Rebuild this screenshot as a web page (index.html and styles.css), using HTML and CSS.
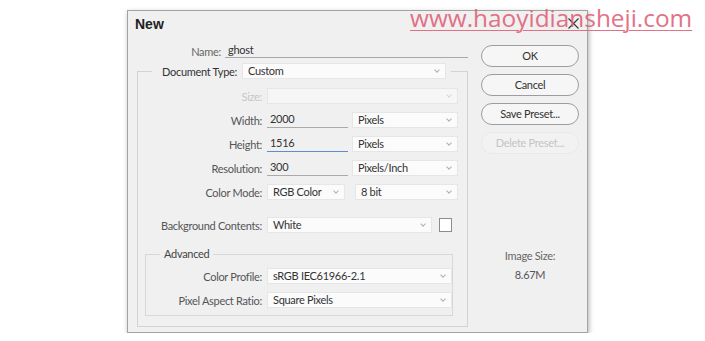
FILE: index.html
```html
<!DOCTYPE html>
<html lang="en">
<head>
    <meta charset="UTF-8">
    <meta name="viewport" content="width=device-width, initial-scale=1.0">
    <title>New</title>
    <link rel="stylesheet" href="styles.css">
</head>
<body>
    <div class="watermark">www.haoyidiansheji.com</div>
    <div class="dialog">
        <div class="titlebar">
            <span class="title">New</span>
            <svg class="close" width="11" height="11" viewBox="0 0 11 11">
                <path d="M0.5 0.5 L10.5 10.5 M10.5 0.5 L0.5 10.5" stroke="#333" stroke-width="1.1" fill="none"/>
            </svg>
        </div>
        <div class="dialog-body">
            <div class="form">
                <div class="name-row">
                    <span class="name-label">Name:</span>
                    <span class="name-value">ghost</span>
                </div>
                <fieldset class="group">
                    <legend class="group-legend">
                        <div class="legend-row">
                            <span class="doc-label">Document Type:</span>
                            <div class="select doc-select">Custom</div>
                        </div>
                    </legend>
                    <div class="row first">
                        <span class="lbl disabled">Size:</span>
                        <div class="select size-select disabled"></div>
                    </div>
                    <div class="row">
                        <span class="lbl">Width:</span>
                        <div class="field">2000</div>
                        <div class="select unit-select">Pixels</div>
                    </div>
                    <div class="row">
                        <span class="lbl">Height:</span>
                        <div class="field focused">1516</div>
                        <div class="select unit-select">Pixels</div>
                    </div>
                    <div class="row">
                        <span class="lbl">Resolution:</span>
                        <div class="field">300</div>
                        <div class="select unit-select">Pixels/Inch</div>
                    </div>
                    <div class="row">
                        <span class="lbl">Color Mode:</span>
                        <div class="select mode-select">RGB Color</div>
                        <div class="select bit-select">8 bit</div>
                    </div>
                    <div class="row bg-row">
                        <span class="lbl">Background Contents:</span>
                        <div class="select bg-select">White</div>
                        <div class="swatch"></div>
                    </div>
                    <fieldset class="advanced">
                        <legend class="adv-legend">Advanced</legend>
                        <div class="row adv-first">
                            <span class="lbl adv-lbl">Color Profile:</span>
                            <div class="select adv-select">sRGB IEC61966-2.1</div>
                        </div>
                        <div class="row">
                            <span class="lbl adv-lbl">Pixel Aspect Ratio:</span>
                            <div class="select adv-select">Square Pixels</div>
                        </div>
                    </fieldset>
                </fieldset>
            </div>
            <div class="side">
                <div class="btn">OK</div>
                <div class="btn">Cancel</div>
                <div class="btn">Save Preset...</div>
                <div class="btn disabled-btn">Delete Preset...</div>
                <div class="image-size">Image Size:</div>
                <div class="image-size-value">8.67M</div>
            </div>
        </div>
    </div>
</body>
</html>
```

FILE: styles.css
```css
body {
    margin: 0;
    background: #fff;
    font-family: "Lato", "Liberation Sans", sans-serif;
    font-size: 11px;
    letter-spacing: -0.3px;
    color: #4a4a4a;
}
.watermark {
    position: absolute;
    left: 410px;
    top: 1px;
    font-family: "Open Sans", "Liberation Sans", sans-serif;
    font-size: 24.4px;
    letter-spacing: 0;
    color: #e0637a;
    text-decoration: underline;
    text-decoration-thickness: 1px;
    text-underline-offset: 3px;
    opacity: 0.9;
}
.dialog {
    margin: 10px 0 0 127px;
    width: 461px;
    height: 323px;
    box-sizing: border-box;
    background: #f0f0f1;
    border: 1px solid #a3a3a3;
    box-shadow: 1px 2px 5px rgba(0, 0, 0, 0.3);
}
.titlebar {
    height: 29px;
    display: flex;
    align-items: center;
    justify-content: space-between;
    padding: 0 8px 0 7px;
}
.title {
    font-family: "Liberation Sans", sans-serif;
    font-weight: bold;
    font-size: 14px;
    letter-spacing: 0;
    color: #222;
    margin-top: -4px;
}
.close {
    margin-top: -5px;
}
.dialog-body {
    display: flex;
}
.form {
    margin-left: 9px;
    width: 331px;
}
.name-row {
    display: flex;
    align-items: flex-end;
    height: 16px;
    margin-top: 2px;
}
.name-label {
    width: 84px;
    text-align: right;
    color: #666;
}
.name-value {
    flex: 1;
    margin-left: 4px;
    padding-left: 3px;
    border-bottom: 1px solid #a9a9a9;
    color: #333;
    line-height: 15px;
}
.group {
    margin: 5px 0 0;
    padding: 0 8px 5px 0;
    border: 1px solid #d3d3d3;
    min-width: 0;
}
.group-legend {
    margin-left: 14px;
    padding: 0 5px 0 10px;
}
.legend-row {
    display: flex;
    align-items: center;
    height: 16px;
}
.doc-label {
    margin-right: 5px;
    color: #333;
}
.row {
    display: flex;
    align-items: center;
    height: 16px;
    margin-top: 8px;
}
.row.first {
    margin-top: 9px;
}
.lbl {
    width: 124px;
    margin-right: 5px;
    text-align: right;
    color: #555;
    flex-shrink: 0;
}
.lbl.disabled {
    color: #c6c6c6;
}
.select {
    position: relative;
    height: 16px;
    box-sizing: border-box;
    background: #fbfbfb;
    border: 1px solid #e6e6e6;
    padding-left: 5px;
    line-height: 14px;
    color: #333;
    flex-shrink: 0;
}
.select::after {
    content: "";
    position: absolute;
    right: 6px;
    top: 4px;
    width: 3px;
    height: 3px;
    border-right: 1px solid #b0b0b0;
    border-bottom: 1px solid #b0b0b0;
    transform: rotate(45deg);
}
.select.disabled {
    background: #f6f6f6;
}
.select.disabled::after {
    border-color: #d8d8d8;
}
.doc-select {
    width: 204px;
}
.size-select {
    width: 191px;
}
.field {
    width: 81px;
    height: 16px;
    box-sizing: border-box;
    border-bottom: 1px solid #aaa;
    padding-left: 3px;
    line-height: 14px;
    color: #333;
}
.field.focused {
    border-bottom-color: #5f8ccc;
}
.unit-select {
    width: 106px;
    margin-left: 4px;
}
.mode-select {
    width: 78px;
}
.bit-select {
    width: 103px;
    margin-left: 10px;
}
.bg-row {
    margin-top: 17px;
}
.bg-select {
    width: 165px;
}
.swatch {
    width: 13px;
    height: 14px;
    box-sizing: border-box;
    margin-left: 7px;
    background: #fff;
    border: 1px solid #8c8c8c;
}
.advanced {
    margin: 14px 6px 5px 7px;
    padding: 0 7px 7px 0;
    border: 1px solid #d8d8d8;
    min-width: 0;
}
.adv-legend {
    margin-left: 14px;
    padding: 0 4px;
    line-height: 14px;
    color: #444;
}
.row.adv-first {
    margin-top: 7px;
}
.adv-lbl {
    width: 116px;
}
.adv-select {
    width: 185px;
}
.side {
    margin-left: 13px;
    width: 98px;
    padding-top: 5px;
}
.btn {
    height: 22px;
    box-sizing: border-box;
    margin-bottom: 7px;
    border: 1px solid #9d9d9d;
    border-radius: 11px;
    background: #f6f6f6;
    text-align: center;
    line-height: 20px;
    color: #333;
}
.btn.disabled-btn {
    border-color: #e9e9e9;
    background: #f2f2f3;
    color: #c4c4c4;
}
.image-size {
    margin-top: 94px;
    text-align: center;
    line-height: 16px;
    color: #666;
}
.image-size-value {
    margin-top: 3px;
    text-align: center;
    line-height: 16px;
    color: #555;
}
```
